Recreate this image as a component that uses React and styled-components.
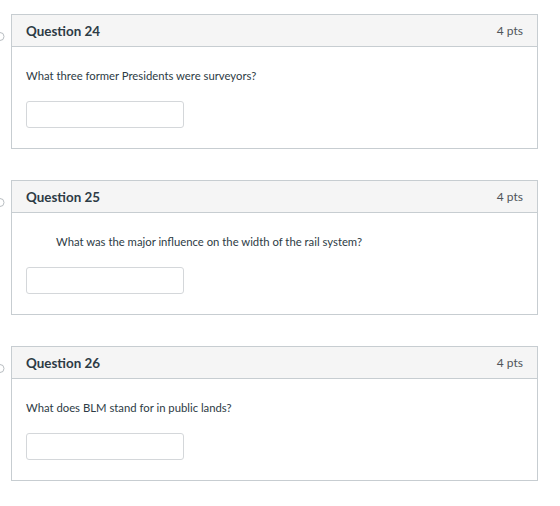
import styled, { createGlobalStyle } from "styled-components"

const GlobalStyle = createGlobalStyle`
body{
margin:0;
background:#ffffff;
font-family:Lato, "Open Sans", sans-serif;
color:#2d3b45;
}
`

const Page = styled.div`
display:flex;
flex-direction:column;
gap:31px;
padding:14px 0 0 0;
`
const QuestionRow = styled.div`
display:flex;
align-items:flex-start;
`
// the flag marker sits in a narrow gutter left of each card
const Gutter = styled.div`
width:11px;
flex:none;
padding-top:12px;
`
const Card = styled.div`
width:525px;
border:1px solid #c7cdd1;
background:#ffffff;
`
const Header = styled.div`
display:flex;
justify-content:space-between;
align-items:center;
height:31px;
padding:0 14px;
background:#f5f5f5;
border-bottom:1px solid #c7cdd1;
`
const Title = styled.h2`
margin:0;
font-size:13.4px;
font-weight:700;
color:#2d3b45;
`
const Points = styled.span`
font-size:12px;
color:#4f5459;
`
const Body = styled.div`
padding:21px 14px 20px 14px;
`
const Text = styled.p`
margin:0 0 17px 0;
padding-left:${props => props.indent ? "30px" : "0"};
font-size:11.3px;
line-height:16px;
color:#2d3b45;
`
const Answer = styled.input`
display:block;
box-sizing:border-box;
width:158px;
height:27px;
border:1px solid #d4d7da;
border-radius:3px;
background:#ffffff;
outline:none;
`

const questions = [
    { id: 24, text: "What three former Presidents were surveyors?" },
    { id: 25, text: "What was the major influence on the width of the rail system?", indent: true },
    { id: 26, text: "What does BLM stand for in public lands?" },
]

const Flag = () => (
    <svg width="11" height="11" viewBox="0 0 11 11">
        <circle cx="0" cy="5.5" r="4" fill="none" stroke="#b9bec2" strokeWidth="1" />
    </svg>
)

export default function App() {
    return (
        <>
            <GlobalStyle />
            <Page>
                {questions.map(q => (
                    <QuestionRow key={q.id}>
                        <Gutter><Flag /></Gutter>
                        <Card>
                            <Header>
                                <Title>Question {q.id}</Title>
                                <Points>4 pts</Points>
                            </Header>
                            <Body>
                                <Text indent={q.indent}>{q.text}</Text>
                                <Answer type="text" />
                            </Body>
                        </Card>
                    </QuestionRow>
                ))}
            </Page>
        </>
    )
}
